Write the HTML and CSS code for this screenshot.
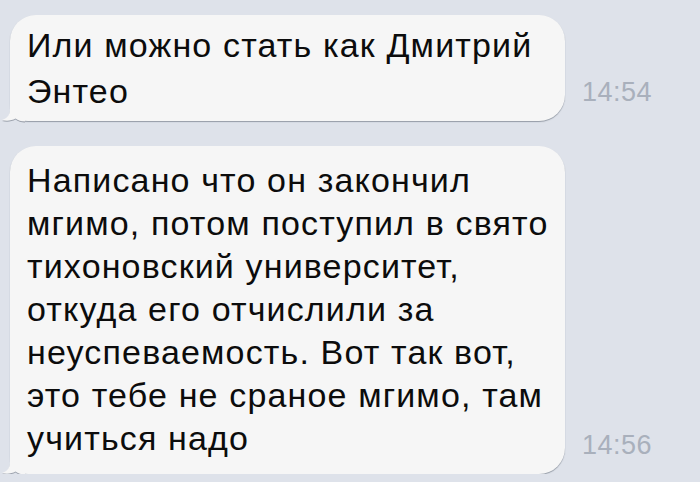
FILE: index.html
```html
<!DOCTYPE html>
<html lang="ru">
<head>
    <meta charset="UTF-8">
    <meta name="viewport" content="width=device-width, initial-scale=1.0">
    <title>Сообщения</title>
    <link rel="stylesheet" href="styles.css">
</head>
<body>
    <div id="chat">
        <div class="row">
            <div class="bubble short">
                Или можно стать как Дмитрий<br>
                Энтео
                <svg class="tail" width="24" height="24" viewBox="0 0 24 24"><path d="M9 0 L9 11 C9 17 6 20.5 1 22 C6 23.5 11 22.5 14.5 20.5 C17 22.5 20 23.5 24 23.5 L24 0 Z"/></svg>
            </div>
            <div class="time">14:54</div>
        </div>
        <div class="row">
            <div class="bubble">
                Написано что он закончил<br>
                мгимо, потом поступил в свято<br>
                тихоновский университет,<br>
                откуда его отчислили за<br>
                неуспеваемость. Вот так вот,<br>
                это тебе не сраное мгимо, там<br>
                учиться надо
                <svg class="tail" width="24" height="24" viewBox="0 0 24 24"><path d="M9 0 L9 11 C9 17 6 20.5 1 22 C6 23.5 11 22.5 14.5 20.5 C17 22.5 20 23.5 24 23.5 L24 0 Z"/></svg>
            </div>
            <div class="time">14:56</div>
        </div>
    </div>
</body>
</html>
```

FILE: styles.css
```css
body{
    margin: 0;
    background-color: #dee2ea;
    font-family: "Liberation Sans", Helvetica, Arial, sans-serif;
}
#chat{
    display: flex;
    flex-direction: column;
    gap: 25px;
    padding: 15px 0 0 10px;
}
.row{
    display: flex;
    flex-direction: row;
    align-items: flex-end;
}
.bubble{
    position: relative;
    width: 555px;
    box-sizing: border-box;
    padding: 13px 6px 14px 17px;
    font-size: 34px;
    line-height: 43px;
    letter-spacing: 1.15px;
    color: #0c0c0c;
    background-color: #f6f6f6;
    border-radius: 26px;
    border-bottom-left-radius: 18px;
    box-shadow: 0 1px 1px rgba(90, 98, 112, 0.55);
}
.short{
    padding-top: 7px;
    padding-bottom: 7px;
    line-height: 46px;
}
.tail{
    position: absolute;
    left: -9px;
    bottom: -1px;
    fill: #f6f6f6;
    filter: drop-shadow(0 1px 0.5px rgba(90, 98, 112, 0.5));
}
.time{
    margin: 0 0 15px 17px;
    font-size: 27px;
    line-height: 27px;
    letter-spacing: 0.5px;
    color: #a9b0bc;
}
```
